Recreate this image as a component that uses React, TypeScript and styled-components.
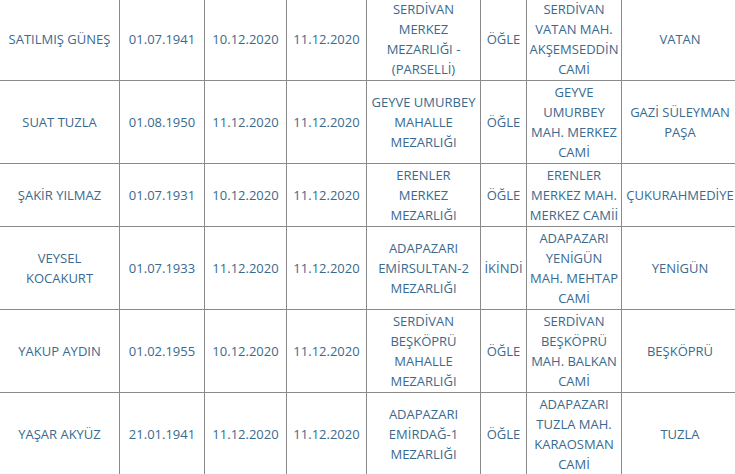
import React from 'react';
import styled, { createGlobalStyle } from 'styled-components';

const GlobalStyle = createGlobalStyle`
  html, body {
    margin: 0;
    padding: 0;
    background: #fff;
    overflow: hidden;
  }
`;

const Page = styled.div`
  width: 735px;
  height: 474px;
  overflow: hidden;
  background: #fff;
`;

const Grid = styled.div`
  display: grid;
  grid-template-columns: 119px 84px 81px 79px 113px 45px 94px 116px;
  gap: 1px;
  padding: 1px;
  margin: -3px 0 0 -1px;
  width: max-content;
  background-color: #8a8a8a;
`;

const Cell = styled.div`
  display: flex;
  align-items: center;
  justify-content: center;
  box-sizing: border-box;
  min-height: 82px;
  padding: 1px 1px;
  background-color: #fff;
  font: normal normal normal 13px/20px 'Open Sans', 'Liberation Sans', sans-serif;
  color: #3a6a8e;
  text-align: center;
  white-space: pre-line;
`;

type Row = string[];

const rows: Row[] = [
  [
    'SATILMIŞ GÜNEŞ',
    '01.07.1941',
    '10.12.2020',
    '11.12.2020',
    'SERDİVAN\nMERKEZ\nMEZARLIĞI -\n(PARSELLİ)',
    'ÖĞLE',
    'SERDİVAN\nVATAN MAH.\nAKŞEMSEDDİN\nCAMİ',
    'VATAN',
  ],
  [
    'SUAT TUZLA',
    '01.08.1950',
    '11.12.2020',
    '11.12.2020',
    'GEYVE UMURBEY\nMAHALLE\nMEZARLIĞI',
    'ÖĞLE',
    'GEYVE\nUMURBEY\nMAH. MERKEZ\nCAMİ',
    'GAZİ SÜLEYMAN\nPAŞA',
  ],
  [
    'ŞAKİR YILMAZ',
    '01.07.1931',
    '10.12.2020',
    '11.12.2020',
    'ERENLER\nMERKEZ\nMEZARLIĞI',
    'ÖĞLE',
    'ERENLER\nMERKEZ MAH.\nMERKEZ CAMİİ',
    'ÇUKURAHMEDİYE',
  ],
  [
    'VEYSEL\nKOCAKURT',
    '01.07.1933',
    '11.12.2020',
    '11.12.2020',
    'ADAPAZARI\nEMİRSULTAN-2\nMEZARLIĞI',
    'İKİNDİ',
    'ADAPAZARI\nYENİGÜN\nMAH. MEHTAP\nCAMİ',
    'YENİGÜN',
  ],
  [
    'YAKUP AYDIN',
    '01.02.1955',
    '10.12.2020',
    '11.12.2020',
    'SERDİVAN\nBEŞKÖPRÜ\nMAHALLE\nMEZARLIĞI',
    'ÖĞLE',
    'SERDİVAN\nBEŞKÖPRÜ\nMAH. BALKAN\nCAMİ',
    'BEŞKÖPRÜ',
  ],
  [
    'YAŞAR AKYÜZ',
    '21.01.1941',
    '11.12.2020',
    '11.12.2020',
    'ADAPAZARI\nEMİRDAĞ-1\nMEZARLIĞI',
    'ÖĞLE',
    'ADAPAZARI\nTUZLA MAH.\nKARAOSMAN\nCAMİ',
    'TUZLA',
  ],
];

const App = () => {
  return (
    <Page>
      <GlobalStyle />
      <Grid role="table">
        {rows.map((row, r) =>
          row.map((text, c) => {
            const lines = Math.max(...row.map((t) => t.split('\n').length));
            return (
              <Cell key={`${r}-${c}`} role="cell" style={{ minHeight: lines * 20 + 2 }}>
                {text}
              </Cell>
            );
          })
        )}
      </Grid>
    </Page>
  );
};

export default App;
